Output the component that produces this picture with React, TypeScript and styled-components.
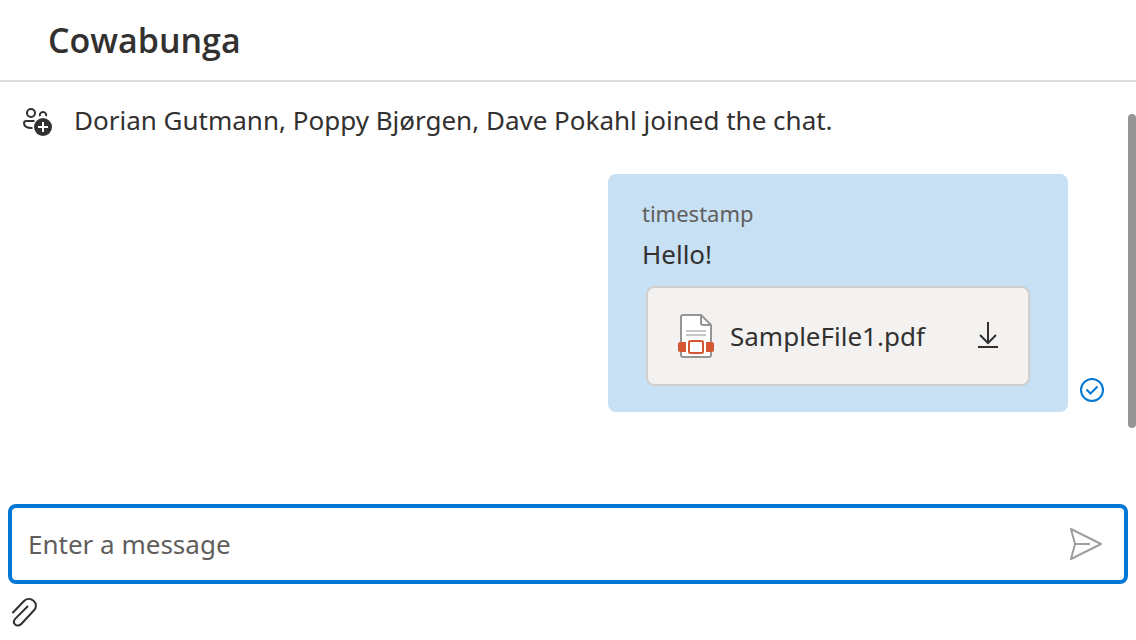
import React, { useState } from "react";
import styled, { createGlobalStyle } from "styled-components";

const GlobalStyle = createGlobalStyle`
  * { box-sizing: border-box; }
  body {
    margin: 0;
    background: #ffffff;
    color: #323130;
    font-family: "Noto Sans", "Open Sans", sans-serif;
    font-size: 26px;
    line-height: 36px;
  }
  svg { display: block; flex: none; overflow: visible; }
`;

const Page = styled.div`
  display: flex;
  flex-direction: column;
  height: 100vh;
`;

const Header = styled.header`
  padding: 18px 48px;
  border-bottom: 2px solid #dddddd;
`;

const Title = styled.h1`
  margin: 0;
  font-family: "Open Sans", sans-serif;
  font-size: 34px;
  line-height: 44px;
  font-weight: 600;
`;

const Thread = styled.main`
  position: relative;
  flex: 1;
  min-height: 0;
  padding: 20px 32px 0 24px;
`;

const ScrollThumb = styled.div`
  position: absolute;
  top: 32px;
  right: 0;
  width: 8px;
  height: 314px;
  border-radius: 4px;
  background: #959595;
`;

const SystemMessage = styled.div`
  display: flex;
  align-items: flex-end;
  gap: 20px;
`;

const SystemText = styled.p`
  margin: 0;
`;

const MessageRow = styled.div`
  display: flex;
  justify-content: flex-end;
  align-items: flex-end;
  gap: 12px;
  margin-top: 36px;
`;

const Bubble = styled.article`
  width: 460px;
  padding: 24px 34px 26px;
  border-radius: 8px;
  background: #c7e0f4;
`;

const Timestamp = styled.div`
  color: #605e5c;
  font-size: 22px;
  line-height: 30px;
`;

const MessageText = styled.p`
  margin: 8px 0 14px;
`;

const FileCard = styled.div`
  display: flex;
  align-items: center;
  height: 100px;
  margin: 0 4px;
  padding: 0 30px;
  border: 2px solid #d2d0ce;
  border-radius: 8px;
  background: #f3f2f1;
`;

const FileName = styled.span`
  flex: 1;
  margin-left: 16px;
`;

const IconButton = styled.button`
  display: flex;
  padding: 0;
  border: 0;
  background: none;
  color: ${(p) => p.color || "#323130"};
  cursor: pointer;
`;

const Receipt = styled.div`
  padding-bottom: 10px;
`;

const Composer = styled.form`
  padding: 0 8px 12px;
`;

const SendBox = styled.div`
  display: flex;
  align-items: center;
  height: 80px;
  padding: 0 21px 0 16px;
  border: 4px solid #0078d4;
  border-radius: 8px;
`;

const MessageInput = styled.input`
  flex: 1;
  min-width: 0;
  height: 40px;
  padding: 0;
  border: 0;
  outline: 0;
  background: none;
  color: inherit;
  font: inherit;
  &::placeholder { color: #605e5c; opacity: 1; }
`;

const Tools = styled.div`
  display: flex;
  padding: 14px 2px 0;
`;

const PeopleAddIcon = () => (
  <svg width="30" height="32" viewBox="0 0 30 32" fill="none" stroke="#323130" strokeWidth="2" aria-hidden="true">
    <circle cx="7" cy="7" r="4" />
    <path d="M16 10.200A3.200 3.200 0 1 1 22 10.200" />
    <path d="M10.500 15H2.500C1 15 0 16 0 17.300C0 20.500 3 22.300 8.500 22" />
    <circle cx="19" cy="21" r="9" fill="#323130" stroke="none" />
    <path d="M19 16V26M14 21H24" stroke="#ffffff" />
  </svg>
);

const FileIcon = () => (
  <svg width="36" height="44" viewBox="0 0 36 44" fill="none" aria-hidden="true">
    <path d="M5 1H23L33 11V41A2 2 0 0 1 31 43H5A2 2 0 0 1 3 41V3A2 2 0 0 1 5 1Z" fill="#ffffff" stroke="#979593" strokeWidth="2" />
    <path d="M23 1V9A2 2 0 0 0 25 11H33" stroke="#979593" strokeWidth="2" />
    <path d="M8 17H28M8 21H28" stroke="#c8c6c4" strokeWidth="2" />
    <path d="M2 28H8V38H2A2 2 0 0 1 0 36V30A2 2 0 0 1 2 28ZM28 28H34A2 2 0 0 1 36 30V36A2 2 0 0 1 34 38H28Z" fill="#d65532" />
    <rect x="11" y="27" width="14" height="12" rx="1.500" fill="#ffffff" stroke="#d65532" strokeWidth="2" />
  </svg>
);

const DownloadIcon = () => (
  <svg width="20" height="28" viewBox="0 0 20 28" fill="none" stroke="currentColor" strokeWidth="2" aria-hidden="true">
    <path d="M10 0V20M2 13L10 21L18 13M0 25H20" />
  </svg>
);

const DeliveredIcon = () => (
  <svg width="24" height="24" viewBox="0 0 24 24" fill="none" stroke="#0078d4" strokeWidth="2" role="img" aria-label="Delivered">
    <circle cx="12" cy="12" r="11" />
    <path d="M6.500 11.500L10.500 15.500L17.500 8.500" />
  </svg>
);

const SendIcon = () => (
  <svg width="34" height="34" viewBox="0 0 34 34" fill="none" stroke="currentColor" strokeWidth="2" strokeLinejoin="round" aria-hidden="true">
    <path d="M2 2L32 17L2 32L6 17ZM6 17H21" />
  </svg>
);

const ClipIcon = () => (
  <svg width="28" height="30" viewBox="0 0 28 30" fill="none" stroke="currentColor" strokeWidth="2" strokeLinecap="round" aria-hidden="true">
    <path d="M3 14.500L13.500 3.500C16.500.5 20.500.200 23.500 2.700C26.700 5.400 26.700 9.500 23.800 12.500L11.500 25.700C9.300 28 6.800 28.200 5 26.400C3.200 24.600 3.600 22.500 5.400 20.600L17.500 8.500" />
  </svg>
);

export default function App() {
  const [message, setMessage] = useState("");
  return (
    <>
      <GlobalStyle />
      <Page>
        <Header>
          <Title>Cowabunga</Title>
        </Header>
        <Thread>
          <SystemMessage>
            <PeopleAddIcon />
            <SystemText>Dorian Gutmann, Poppy Bjørgen, Dave Pokahl joined the chat.</SystemText>
          </SystemMessage>
          <MessageRow>
            <Bubble>
              <Timestamp>timestamp</Timestamp>
              <MessageText>Hello!</MessageText>
              <FileCard>
                <FileIcon />
                <FileName>SampleFile1.pdf</FileName>
                <IconButton type="button" aria-label="Download SampleFile1.pdf">
                  <DownloadIcon />
                </IconButton>
              </FileCard>
            </Bubble>
            <Receipt>
              <DeliveredIcon />
            </Receipt>
          </MessageRow>
          <ScrollThumb />
        </Thread>
        <Composer onSubmit={(e) => e.preventDefault()}>
          <SendBox>
            <MessageInput
              aria-label="Enter a message"
              placeholder="Enter a message"
              value={message}
              onChange={(e) => setMessage(e.target.value)}
            />
            <IconButton type="submit" color="#a19f9d" aria-label="Send message">
              <SendIcon />
            </IconButton>
          </SendBox>
          <Tools>
            <IconButton type="button" aria-label="Attach a file">
              <ClipIcon />
            </IconButton>
          </Tools>
        </Composer>
      </Page>
    </>
  );
}
